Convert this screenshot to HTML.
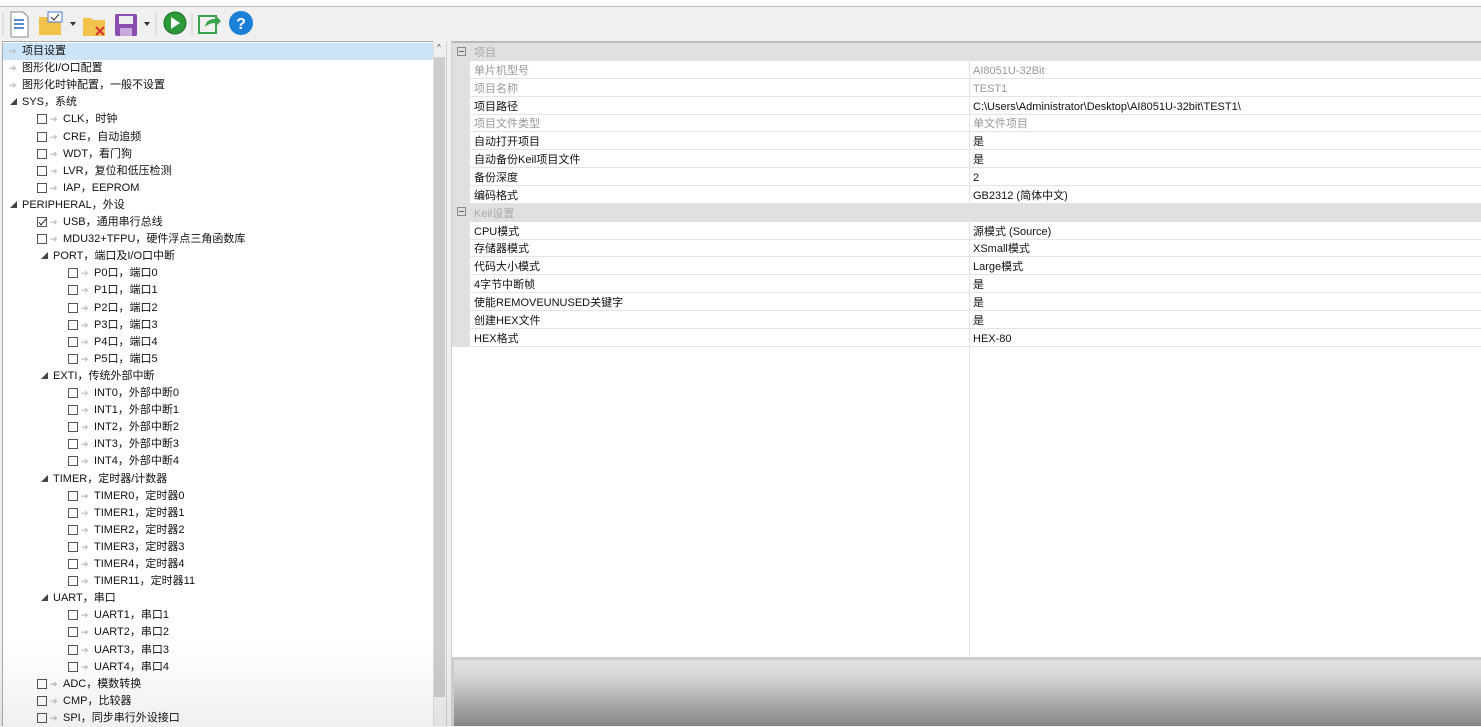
<!DOCTYPE html>
<html><head><meta charset="utf-8">
<style>
*{margin:0;padding:0;box-sizing:border-box}
body{width:1481px;height:726px;overflow:hidden;background:#f0f0f0;font-family:"Liberation Sans","Noto Sans CJK SC",sans-serif;font-size:11px;color:#111;position:relative}
.abs{position:absolute}
#title{left:0;top:0;width:1481px;height:7px;background:#fff;border-bottom:1px solid #bbb}
#tb{left:0;top:7px;width:1481px;height:34px;background:#f0f0f0}
#tree{left:2px;top:41px;width:432px;height:685px;background:#fff;border-left:1px solid #aaa;border-top:1px solid #aaa}
.ti{position:absolute;height:17px;line-height:17px;white-space:nowrap}
.cb{position:absolute;width:10px;height:10px;border:1px solid #555;background:#fff;top:3px}
.ar{position:absolute;color:#bbb;font-size:9px;top:0}
.tri{position:absolute;font-size:7px;color:#444;top:0}
#sb{left:433px;top:41px;width:13px;height:685px;background:#f0f0f0;border-left:1px solid #ddd}
#thumb{left:434px;top:57px;width:11px;height:640px;background:#cdcdcd}
#split{left:446px;top:41px;width:6px;height:685px;background:#f0f0f0;border-left:1px solid #c8d4d8;border-right:1px solid #c8d4d8}
#grid{left:452px;top:41px;width:1029px;height:616px;background:#fff;border-top:2px solid #bbb}
.row{position:absolute;left:0;width:1029px;height:18px;line-height:18px;padding-top:1px;border-bottom:1px solid #e4e4e4}
.row .k{position:absolute;left:22px}
.row .v{position:absolute;left:521px}
.gr{background:#e0e0e0;color:#aaa}
.g{color:#999}
#margin{left:452px;top:43px;width:18px;height:304px;background:#e0e0e0}
#vline{left:969px;top:59px;width:1px;height:597px;background:#e4e4e4}
#bot{left:452px;top:657px;width:1029px;height:69px;border-top:3px solid #ccc;border-left:2px solid #ccc;background:linear-gradient(#e2e2e2,#d6d6d6 25%,#b0b0b0 60%,#868686)}
#shade{left:0;top:640px;width:452px;height:86px;background:linear-gradient(rgba(0,0,0,0),rgba(0,0,0,.06))}
</style></head><body>
<div id="title" class="abs"></div>
<div id="tb" class="abs">
 <svg width="270" height="34" style="position:absolute;left:0;top:0">
  <line x1="3" y1="6" x2="3" y2="28" stroke="#ccc"/>
  <path d="M11 5h12l5 5v20H11z" fill="#fff" stroke="#888"/>
  <rect x="14" y="12" width="10" height="2" fill="#5a8ad8"/><rect x="14" y="16" width="10" height="2" fill="#5a8ad8"/><rect x="14" y="20" width="10" height="2" fill="#5a8ad8"/>
  <path d="M39 10h8l2 2h12v16H39z" fill="#f2c24b"/><rect x="48" y="5" width="14" height="10" fill="#fff" stroke="#4a7bd0"/><path d="M51 10l3 3 5-6" stroke="#333" fill="none"/>
  <path d="M70 15l3 4 3-4z" fill="#333"/>
  <path d="M83 11h8l2 2h12v16H83z" fill="#f2c24b"/><path d="M96 20l8 8M104 20l-8 8" stroke="#d33" stroke-width="2"/>
  <rect x="115" y="7" width="22" height="22" rx="2" fill="#8a4db0"/><rect x="119" y="9" width="14" height="8" fill="#eee"/><rect x="120" y="21" width="12" height="8" fill="#c9a8dd"/>
  <path d="M144 15l3 4 3-4z" fill="#333"/>
  <line x1="156" y1="6" x2="156" y2="28" stroke="#ccc"/>
  <circle cx="175" cy="16" r="11" fill="#2d9a3a" stroke="#1d6b26"/><path d="M171 10v12l9-6z" fill="#fff"/>
  <line x1="192" y1="6" x2="192" y2="28" stroke="#ccc"/>
  <rect x="199" y="9" width="17" height="17" fill="none" stroke="#3aa24a" stroke-width="2"/><path d="M205 20q1-8 10-8v-4l6 6-6 6v-4q-6 0-10 4z" fill="#3aa24a"/>
  <circle cx="241" cy="16" r="12" fill="#1a7fd6"/><text x="241" y="22" font-size="16" font-weight="bold" fill="#fff" text-anchor="middle" font-family="Liberation Sans">?</text>
 </svg>
</div>
<div id="tree" class="abs">
 <div class="abs" style="left:0;top:1px;width:431px;height:17px;background:#cce4f7"></div>
</div>
<div id="sb" class="abs"><div style="position:absolute;left:3px;top:2px;font-size:8px;color:#444">^</div></div>
<div id="thumb" class="abs"></div>
<div id="split" class="abs"></div>
<div id="grid" class="abs"></div>
<div id="margin" class="abs"></div>
<svg class="abs" style="left:457px;top:47px" width="9" height="9"><rect x="0.5" y="0.5" width="8" height="8" fill="none" stroke="#888"/><path d="M2 4.5h5" stroke="#666"/></svg>
<svg class="abs" style="left:457px;top:207px" width="9" height="9"><rect x="0.5" y="0.5" width="8" height="8" fill="none" stroke="#888"/><path d="M2 4.5h5" stroke="#666"/></svg>
<div id="vline" class="abs"></div>
<div id="bot" class="abs"></div>
<div id="shade" class="abs"></div>
<script>
var T=[
[0,'a','项目设置'],[0,'a','图形化I/O口配置'],[0,'a','图形化时钟配置，一般不设置'],[0,'t','SYS，系统'],
[1,'c','CLK，时钟'],[1,'c','CRE，自动追频'],[1,'c','WDT，看门狗'],[1,'c','LVR，复位和低压检测'],[1,'c','IAP，EEPROM'],
[0,'t','PERIPHERAL，外设'],[1,'k','USB，通用串行总线'],[1,'c','MDU32+TFPU，硬件浮点三角函数库'],[1,'t','PORT，端口及I/O口中断'],
[2,'c','P0口，端口0'],[2,'c','P1口，端口1'],[2,'c','P2口，端口2'],[2,'c','P3口，端口3'],[2,'c','P4口，端口4'],[2,'c','P5口，端口5'],
[1,'t','EXTI，传统外部中断'],[2,'c','INT0，外部中断0'],[2,'c','INT1，外部中断1'],[2,'c','INT2，外部中断2'],[2,'c','INT3，外部中断3'],[2,'c','INT4，外部中断4'],
[1,'t','TIMER，定时器/计数器'],[2,'c','TIMER0，定时器0'],[2,'c','TIMER1，定时器1'],[2,'c','TIMER2，定时器2'],[2,'c','TIMER3，定时器3'],[2,'c','TIMER4，定时器4'],[2,'c','TIMER11，定时器11'],
[1,'t','UART，串口'],[2,'c','UART1，串口1'],[2,'c','UART2，串口2'],[2,'c','UART3，串口3'],[2,'c','UART4，串口4'],
[1,'c','ADC，模数转换'],[1,'c','CMP，比较器'],[1,'c','SPI，同步串行外设接口']];
var tr=document.getElementById('tree'),h='';
T.forEach(function(e,i){
 var y=1+i*17.1, L=e[0], t=e[1], s='';
 if(t=='a'){s='<span class="ar" style="left:6px">➔</span><span style="position:absolute;left:19px">'+e[2]+'</span>';}
 else if(t=='t'){var x=L==0?7:38;s='<span class="tri" style="left:'+x+'px">◢</span><span style="position:absolute;left:'+(x+12)+'px">'+e[2]+'</span>';}
 else{var x=L==1?34:65;s='<span class="cb" style="left:'+x+'px">'+(t=='k'?'<svg width="10" height="10" style="position:absolute;left:-1px;top:-1px"><path d="M2 5l2 3 5-6" stroke="#333" fill="none"/></svg>':'')+'</span><span class="ar" style="left:'+(x+13)+'px">➔</span><span style="position:absolute;left:'+(x+26)+'px">'+e[2]+'</span>';}
 h+='<div class="ti" style="left:0;top:'+y+'px;width:430px">'+s+'</div>';
});
tr.innerHTML+=h;
var R=[['g','项目'],['','单片机型号','AI8051U-32Bit',1],['','项目名称','TEST1',1],['','项目路径','C:\\Users\\Administrator\\Desktop\\AI8051U-32bit\\TEST1\\'],['','项目文件类型','单文件项目',1],['','自动打开项目','是'],['','自动备份Keil项目文件','是'],['','备份深度','2'],['','编码格式','GB2312 (简体中文)'],
['g','Keil设置'],['','CPU模式','源模式 (Source)'],['','存储器模式','XSmall模式'],['','代码大小模式','Large模式'],['','4字节中断帧','是'],['','使能REMOVEUNUSED关键字','是'],['','创建HEX文件','是'],['','HEX格式','HEX-80']];
var g=document.getElementById('grid');h='';
R.forEach(function(r,i){
 var y=i*17.85;
 if(r[0]=='g')h+='<div class="row gr" style="top:'+y+'px;border-bottom:none"><span class="k">'+r[1]+'</span></div>';
 else h+='<div class="row'+(r[3]?' g':'')+'" style="top:'+y+'px;left:18px;width:1011px"><span class="k" style="left:4px">'+r[1]+'</span><span class="v" style="left:503px">'+r[2]+'</span></div>';
});
g.innerHTML=h;
</script>
</body></html>
